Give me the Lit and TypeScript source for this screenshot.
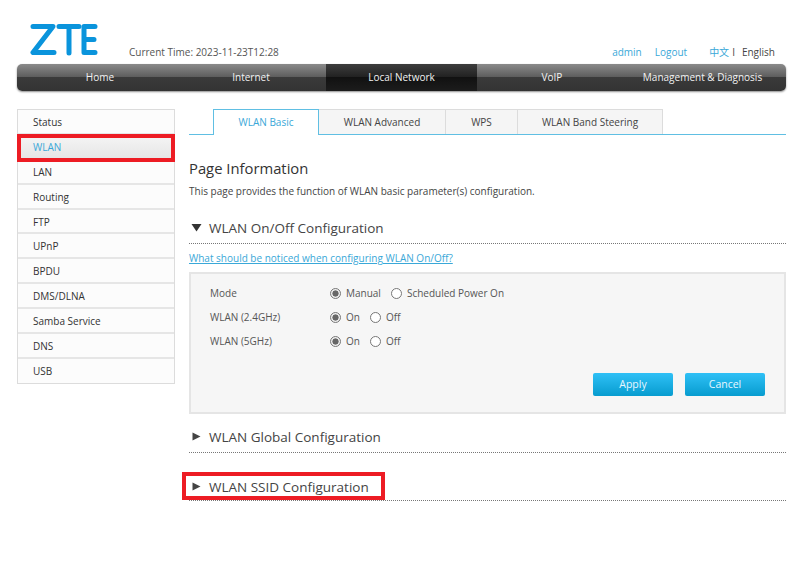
import { LitElement, html, css, svg } from "lit";
import { customElement } from "lit/decorators.js";

const NAV = [
  ["Home", 166],
  ["Internet", 143],
  ["Local Network", 151],
  ["VoIP", 150],
  ["Management & Diagnosis", 159],
];
const SIDE = ["Status", "WLAN", "LAN", "Routing", "FTP", "UPnP", "BPDU", "DMS/DLNA", "Samba Service", "DNS", "USB"];
const TABS = [
  ["WLAN Basic", 106],
  ["WLAN Advanced", 128],
  ["WPS", 73],
  ["WLAN Band Steering", 146],
];

@customElement("app-root")
export class AppRoot extends LitElement {
  static styles = css`
    :host {
      display: block;
      width: 800px;
      height: 561px;
      position: relative;
      overflow: hidden;
      background: #fff;
      font-family: "Open Sans", "Noto Sans CJK SC", sans-serif;
      font-size: 10px;
      color: #444;
    }
    .head { height: 64px; display: flex; align-items: flex-end; padding: 0 25px 0 17px; box-sizing: border-box; }
    .logo { display: block; margin: 0 0 8px 13px; flex: none; }
    .time { margin: 0 0 5px 31px; line-height: 14px; color: #555; }
    .links { margin: 0 0 5px auto; display: flex; line-height: 14px; color: #444; }
    .links a { color: #3aa8d8; }
    .logout { margin-left: 13px; }
    .lang { margin-left: 22px; }
    .sep { margin: 0 7px 0 3px; }
    .nav {
      margin: 0 14px 0 17px; height: 27px; display: flex; border-radius: 5px; overflow: hidden; color: #f2f2f2;
      background: linear-gradient(#8a8a8a 0, #5e5e5e 47%, #3a3a3a 49%, #333 100%);
      box-shadow: 0 1px 2px rgba(0, 0, 0, .45);
    }
    .nav div { display: flex; align-items: center; justify-content: center; flex: none; height: 100%; box-sizing: border-box; padding-bottom: 2px; }
    .nav div:nth-child(2) { padding-right: 7px; }
    .nav div:nth-child(5) { padding-right: 8px; }
    .nav .on { background: linear-gradient(#3d3d3d 0, #222 47%, #111 49%, #1c1c1c 100%); }
    .body { display: flex; margin: 18px 14px 0 17px; gap: 14px; align-items: flex-start; }
    .side { width: 158px; flex: none; box-sizing: border-box; border: 1px solid #dcdcdc; color: #333; }
    .side div { height: 24.9px; box-sizing: border-box; line-height: 24px; padding-left: 15px; border-bottom: 2px solid #e6e6e6; background: #fcfcfc; }
    .side div:last-child { border-bottom: 0; height: 24px; }
    .side .on { color: #3aa8d8; background: linear-gradient(#f5f5f5, #e6e6e6); }
    .main { flex: 1; min-width: 0; }
    .tabs { display: flex; height: 25px; padding-left: 24px; border-bottom: 1px solid #60bfe3; box-sizing: content-box; }
    .tabs div {
      box-sizing: border-box; height: 25px; line-height: 24px; text-align: center; flex: none; margin-right: -1px;
      border: 1px solid #dcdcdc; border-bottom: 0; background: #f5f5f5; color: #444;
    }
    .tabs .on { height: 26px; background: #fff; color: #3aa8d8; border-color: #60bfe3; position: relative; z-index: 1; }
    h1 { font-size: 14.8px; font-weight: 400; margin: 23px 0 0; line-height: 20px; color: #333; }
    .desc { margin: 6px 0 0; line-height: 14px; color: #444; }
    .sec { display: flex; align-items: center; height: 30px; padding-bottom: 2px; font-size: 13.5px; color: #444; border-bottom: 1px dotted #777; box-sizing: border-box; }
    .sec svg { margin: 0 7px 0 2px; flex: none; }
    .s1 { margin-top: 16px; }
    .s2 { margin-top: 9px; }
    .s3 { margin-top: 18px; padding: 2px 0 0; }
    .help { display: block; margin-top: 7px; line-height: 15px; color: #3aa8d8; text-decoration: underline; }
    .panel { margin-top: 6px; height: 142px; background: #f6f6f6; border: 2px solid #e5e5e5; box-sizing: border-box; padding: 7px 19px 0; position: relative; }
    .row { display: flex; align-items: center; height: 24px; }
    .label { width: 120px; flex: none; color: #555; }
    .opt { display: flex; align-items: center; margin-right: 10px; color: #555; }
    .r { width: 9px; height: 9px; border: 1px solid #777; border-radius: 50%; margin-right: 5px; background: #fff; display: block; box-sizing: content-box; }
    .r.c { background: radial-gradient(circle, #666 0 2.8px, #eee 3.4px); }
    .btns { display: flex; justify-content: flex-end; gap: 12px; margin: 20px 0 0; }
    .btn {
      width: 80px; height: 23px; line-height: 22px; text-align: center; border-radius: 2px; color: #e8f7ff; font-size: 10.5px;
      background: linear-gradient(#2fc0f6, #079ccf);
    }
    .mark { position: absolute; border: 4px solid #ed1c24; box-sizing: border-box; pointer-events: none; }
    .m1 { left: 17px; top: 134px; width: 158px; height: 28px; }
    .m2 { left: 182px; top: 472px; width: 203px; height: 28px; }
  `;

  private arrow(down: boolean) {
    return html`<svg width="11" height="9" viewBox="0 0 11 9">
      ${down
        ? svg`<path d="M.5 1h10L5.5 8.5z" fill="#333"/>`
        : svg`<path d="M1.5 .5l8 4-8 4z" fill="#444"/>`}
    </svg>`;
  }

  private opt(label: string, checked: boolean) {
    return html`<span class="opt"><i class="r ${checked ? "c" : ""}"></i>${label}</span>`;
  }

  render() {
    return html`
      <div class="head">
        <svg class="logo" width="68" height="33" viewBox="0 0 68 33" fill="none" stroke="#0a94dc" stroke-width="5" stroke-linejoin="round" stroke-linecap="round">
          <path d="M3 3.5H23L3 29.5H24"/>
          <path d="M29 3.5H49M39 3.5V30"/>
          <path d="M65 3.5H54V29.5H65M54 16.5H64"/>
        </svg>
        <span class="time">Current Time: 2023-11-23T12:28</span>
        <span class="links">
          <a>admin</a><a class="logout">Logout</a><a class="lang">中文</a><span class="sep">I</span><span>English</span>
        </span>
      </div>
      <div class="nav">
        ${NAV.map(([n, w], i) => html`<div class=${i === 2 ? "on" : ""} style="width:${w}px">${n}</div>`)}
      </div>
      <div class="body">
        <div class="side">
          ${SIDE.map((s) => html`<div class=${s === "WLAN" ? "on" : ""}>${s}</div>`)}
        </div>
        <div class="main">
          <div class="tabs">
            ${TABS.map(([n, w], i) => html`<div class=${i === 0 ? "on" : ""} style="width:${w}px">${n}</div>`)}
          </div>
          <h1>Page Information</h1>
          <p class="desc">This page provides the function of WLAN basic parameter(s) configuration.</p>
          <div class="sec s1">${this.arrow(true)}WLAN On/Off Configuration</div>
          <a class="help">What should be noticed when configuring WLAN On/Off?</a>
          <div class="panel">
            <div class="row"><span class="label">Mode</span>${this.opt("Manual", true)}${this.opt("Scheduled Power On", false)}</div>
            <div class="row"><span class="label">WLAN (2.4GHz)</span>${this.opt("On", true)}${this.opt("Off", false)}</div>
            <div class="row"><span class="label">WLAN (5GHz)</span>${this.opt("On", true)}${this.opt("Off", false)}</div>
            <div class="btns"><div class="btn">Apply</div><div class="btn">Cancel</div></div>
          </div>
          <div class="sec s2">${this.arrow(false)}WLAN Global Configuration</div>
          <div class="sec s3">${this.arrow(false)}WLAN SSID Configuration</div>
        </div>
      </div>
      <div class="mark m1"></div>
      <div class="mark m2"></div>
    `;
  }
}
